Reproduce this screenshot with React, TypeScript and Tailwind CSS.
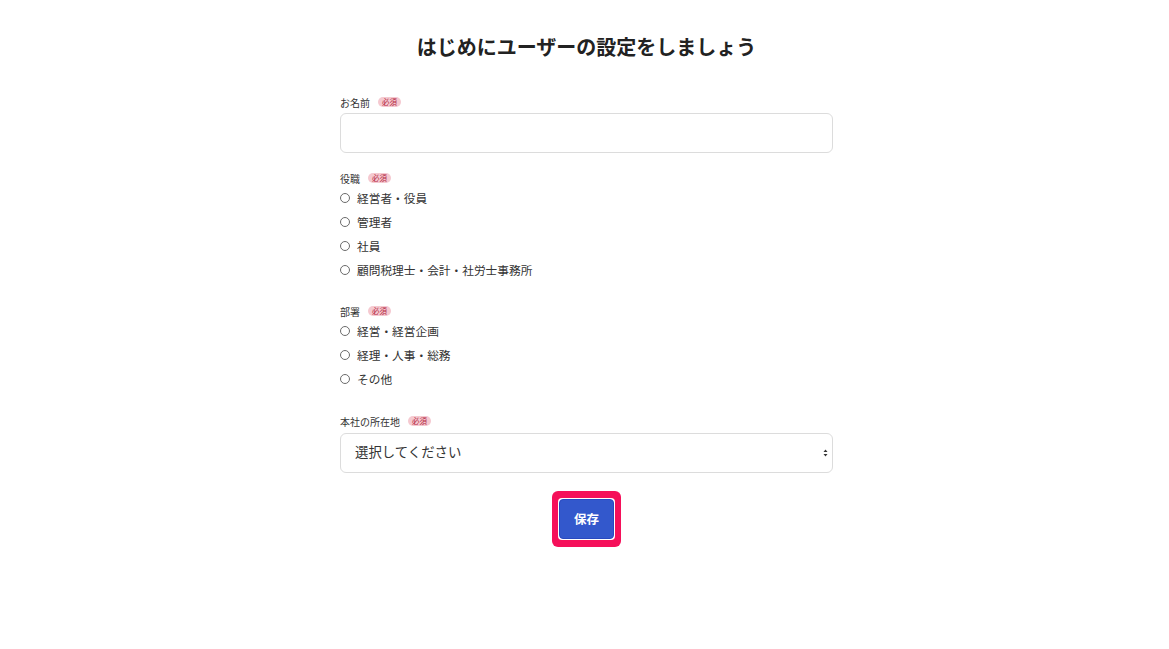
import React, { useState } from "react";

const roles = ["経営者・役員", "管理者", "社員", "顧問税理士・会計・社労士事務所"];
const departments = ["経営・経営企画", "経理・人事・総務", "その他"];

const Required = () => (
  <span className="ml-[8px] inline-flex h-[10px] items-center rounded-full bg-[#f5c9d0] px-[4px] text-[7.5px] leading-none text-[#b3263f]">
    必須
  </span>
);

const Label = ({ children }: { children: React.ReactNode }) => (
  <div className="flex h-[14px] items-center text-[10px] text-[#333]">
    <span>{children}</span>
    <Required />
  </div>
);

const RadioGroup = ({
  name,
  options,
  value,
  onChange,
}: {
  name: string;
  options: string[];
  value: string;
  onChange: (v: string) => void;
}) => (
  <div className="flex flex-col">
    {options.map((opt) => (
      <label key={opt} className="flex h-[24px] cursor-pointer items-center">
        <input
          type="radio"
          name={name}
          checked={value === opt}
          onChange={() => onChange(opt)}
          className="m-0 h-[10px] w-[10px] appearance-none rounded-full border border-[#6b6b6b] bg-white checked:border-[3px] checked:border-[#3358cc]"
        />
        <span className="ml-[7px] text-[11.7px] text-[#333]">{opt}</span>
      </label>
    ))}
  </div>
);

export default function App() {
  const [name, setName] = useState("");
  const [role, setRole] = useState("");
  const [dept, setDept] = useState("");
  const [location, setLocation] = useState("");

  return (
    <div
      className="min-h-[649px] w-full bg-white pl-[4px]"
      style={{ fontFamily: '"Noto Sans CJK JP", "Noto Sans", sans-serif' }}
    >
      <div className="mx-auto w-[493px] pt-[33px]">
        <h1 className="text-center text-[20px] font-bold leading-[28px] text-[#222]">
          はじめにユーザーの設定をしましょう
        </h1>

        <div className="mt-[34px]">
          <Label>お名前</Label>
          <input
            type="text"
            value={name}
            onChange={(e) => setName(e.target.value)}
            className="mt-[4px] block h-[40px] w-full rounded-[6px] border border-[#dcdcdc] px-[14px] text-[13px] outline-none"
          />
        </div>

        <div className="mt-[18px]">
          <Label>役職</Label>
          <div className="mt-[1px]">
            <RadioGroup name="role" options={roles} value={role} onChange={setRole} />
          </div>
        </div>

        <div className="mt-[22px]">
          <Label>部署</Label>
          <div className="mt-[1px]">
            <RadioGroup name="dept" options={departments} value={dept} onChange={setDept} />
          </div>
        </div>

        <div className="mt-[23px]">
          <Label>本社の所在地</Label>
          <div className="relative mt-[5px]">
            <select
              value={location}
              onChange={(e) => setLocation(e.target.value)}
              className="block h-[40px] w-full appearance-none rounded-[6px] border border-[#dcdcdc] bg-white pb-[3px] pl-[14px] pr-[24px] text-[13.4px] text-[#333] outline-none"
            >
              <option value="">選択してください</option>
              <option value="tokyo">東京都</option>
              <option value="osaka">大阪府</option>
            </select>
            <svg
              className="pointer-events-none absolute right-[5px] top-1/2 -translate-y-1/2"
              width="5"
              height="8"
              viewBox="0 0 5 8"
            >
              <path d="M2.5 0.5 L4.5 3 H0.5 Z" fill="#333" />
              <path d="M2.5 7.5 L4.5 5 H0.5 Z" fill="#333" />
            </svg>
          </div>
        </div>

        <div className="mt-[18px] flex justify-center">
          <div className="rounded-[6px] bg-[#f5105a] px-[6px] py-[7px]">
            <div className="rounded-[4px] bg-white p-[1px]">
              <button className="flex h-[40px] w-[55px] items-center justify-center rounded-[4px] border border-[#2848c0] bg-[#3358cc] text-[12.5px] font-bold text-white">
                保存
              </button>
            </div>
          </div>
        </div>
      </div>
    </div>
  );
}
